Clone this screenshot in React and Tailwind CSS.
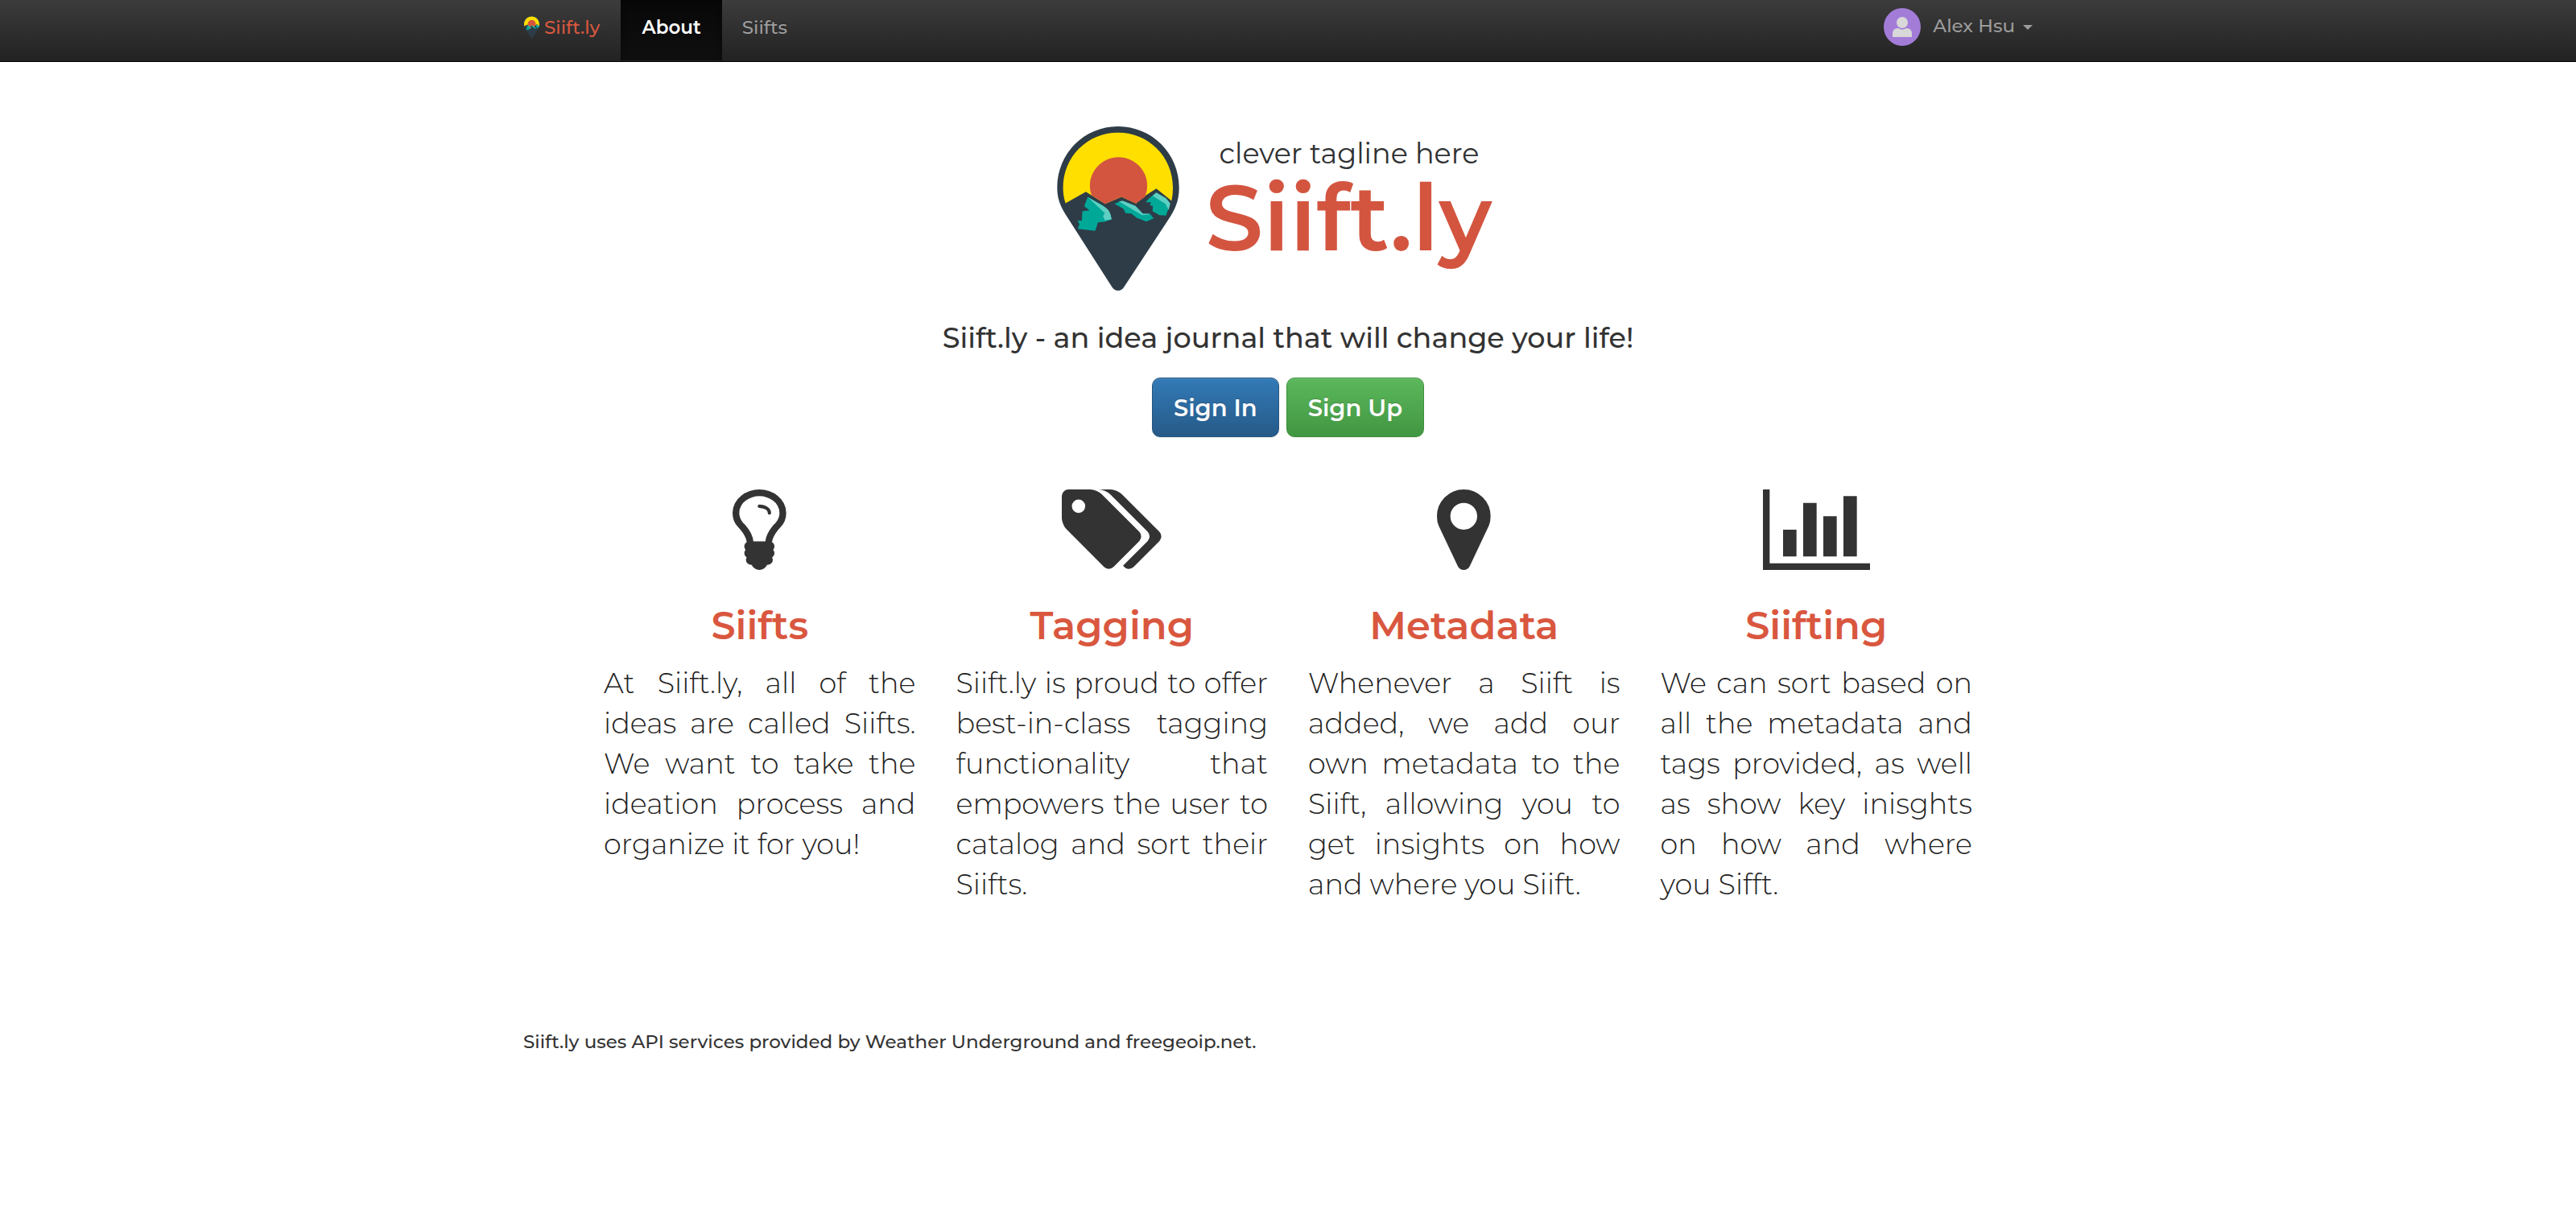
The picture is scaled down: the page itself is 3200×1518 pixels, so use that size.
import React from "react";

const FEATURES = [
  {
    title: "Siifts",
    viewBox: "384 128 1024 1536",
    path: "M1120 576q0 13-9.5 22.5t-22.5 9.5-22.5-9.5-9.5-22.5q0-46-54-71t-106-25q-13 0-22.5-9.5t-9.5-22.5 9.5-22.5 22.5-9.5q50 0 99.5 16t87 54 37.5 90zm160 0q0-72-34.5-134t-90-101.5-123-62-136.5-22.5-136.5 22.5-123 62-90 101.5-34.5 134q0 101 68 180 10 11 30.5 33t30.5 33q128 153 141 298h228q13-145 141-298 10-11 30.5-33t30.5-33q68-79 68-180zm128 0q0 155-103 268-45 49-74.5 87t-59.5 95.5-34 107.5q47 28 47 82 0 37-25 64 25 27 25 64 0 52-45 81 13 23 13 47 0 46-31.5 71t-77.5 25q-20 44-60 70t-87 26-87-26-60-70q-46 0-77.5-25t-31.5-71q0-24 13-47-45-29-45-81 0-37 25-64-25-27-25-64 0-54 47-82-4-50-34-107.5t-59.5-95.5-74.5-87q-103-113-103-268 0-99 44.5-184.5t117-142 164-89 186.5-32.5 186.5 32.5 164 89 117 142 44.5 184.5z",
    text: "At Siift.ly, all of the ideas are called Siifts. We want to take the ideation process and organize it for you!",
  },
  {
    title: "Tagging",
    viewBox: "0 128 1899 1536",
    path: "M448 448q0-53-37.5-90.5t-90.5-37.5-90.5 37.5-37.5 90.5 37.5 90.5 90.5 37.5 90.5-37.5 37.5-90.5zm1067 576q0 53-37 90l-491 492q-39 37-91 37-53 0-90-37l-715-716q-38-37-64.5-101t-26.5-117v-416q0-52 38-90t90-38h416q53 0 117 26.5t102 64.5l715 714q37 39 37 91zm384 0q0 53-37 90l-491 492q-39 37-91 37-36 0-59-14t-53-45l470-470q37-37 37-90 0-52-37-91l-715-714q-38-38-102-64.5t-117-26.5h224q53 0 117 26.5t102 64.5l715 714q37 39 37 91z",
    text: "Siift.ly is proud to offer best-in-class tagging functionality that empowers the user to catalog and sort their Siifts.",
  },
  {
    title: "Metadata",
    viewBox: "384 128 1024 1536",
    path: "M1152 640q0-106-75-181t-181-75-181 75-75 181 75 181 181 75 181-75 75-181zm256 0q0 109-33 179l-364 774q-16 33-47.5 52t-67.5 19-67.5-19-46.5-52l-365-774q-33-70-33-179 0-212 150-362t362-150 362 150 150 362z",
    text: "Whenever a Siift is added, we add our own metadata to the Siift, allowing you to get insights on how and where you Siift.",
  },
  {
    title: "Siifting",
    viewBox: "0 128 2048 1536",
    path: "M640 896v512h-256v-512h256zm384-512v1024h-256v-1024h256zm1024 1152v128h-2048v-1536h128v1408h1920zm-640-896v768h-256v-768h256zm384-384v1152h-256v-1152h256z",
    text: "We can sort based on all the metadata and tags provided, as well as show key inisghts on how and where you Sifft.",
  },
];

function PinLogo({ className }) {
  return (
    <svg viewBox="68 50 455 613" className={className} aria-hidden="true">
      <path
        fill="#2e3c47"
        d="M295 50C421 50 523 151 523 278C523 327 508 360 484 396L317 650Q308 663 295 663Q283 663 273 650L99 378C78 344 68 318 68 278C68 151 169 50 295 50Z"
      />
      <path
        fill="#ffdf00"
        d="M99 337C92 315 90 297 90 278C90 163 181 73 295 73C409 73 500 163 500 278Q500 303 495 328L438 282L404 304L362 338L308 313L247 339L175 294Z"
      />
      <path
        fill="#d35540"
        d="M196 307A107 107 0 1 1 398 307L397 312L362 338L308 313L247 339Z"
      />
      <path
        fill="#00a898"
        d="M182 314L240 346L268 380L271 397L245 406L220 408L210 440L145 432L151 415L144 401L160 402L162 366L189 364L169 348Z"
      />
      <path fill="#5fcfc3" d="M182 314L236 345Q262 357 267 379L271 397L246 401L239 385L246 374Z" />
      <path fill="#00a898" d="M282 339L310 327L360 347L388 376L415 377L428 393L401 405L364 391L345 375L323 374L315 357Z" />
      <path fill="#5fcfc3" d="M298 330L313 328L360 347L388 376L413 376L409 379L385 381Z" />
      <path fill="#00a898" d="M398 333L413 317L438 297L474 318L490 338L474 383L450 381L424 367L425 347L414 345L418 333Z" />
      <path fill="#5fcfc3" d="M424 309L438 297L474 318L490 338L484 362L472 339Z" />
    </svg>
  );
}

function Navbar() {
  return (
    <nav className="border-b border-black bg-linear-to-b from-[#3c3c3c] to-[#222222] text-[23px] leading-[33px] font-medium text-[#9d9d9d]">
      <div className="mx-auto flex h-[76px] max-w-[1900px] items-start">
        <a href="#home" className="flex items-start pt-[18px] pr-[26px] text-[#d9573f]">
          <PinLogo className="mt-px mr-[5px] h-[29px] w-[21px]" />
          <span>Siift.ly</span>
        </a>
        <a
          href="#about"
          aria-current="page"
          className="bg-linear-to-b from-[#080808] to-[#0f0f0f] px-[26px] pt-[18px] pb-6 font-semibold text-white shadow-[inset_0_3px_9px_rgba(0,0,0,0.25)]"
        >
          About
        </a>
        <a href="#siifts" className="px-[25px] pt-[18px] [text-shadow:0_-1px_0_rgba(0,0,0,0.25)]">
          Siifts
        </a>
        <button type="button" className="ml-auto flex items-start pt-[10px] pr-[25px] [text-shadow:0_-1px_0_rgba(0,0,0,0.25)]">
          <svg viewBox="0 0 46 47" className="h-[47px] w-[46px]" aria-hidden="true">
            <ellipse cx="23" cy="23.5" rx="23" ry="23.5" fill="#a37cd8" />
            <circle cx="23" cy="18" r="7" fill="#d8d8d8" />
            <path fill="#d8d8d8" d="M11 36V32Q11 25 18 25Q23 28.500 28 25Q35 25 35 32V36Z" />
          </svg>
          <span className="mt-[6px] ml-[15px]">Alex Hsu</span>
          <svg viewBox="0 0 12 6" className="mt-[21px] ml-[10px] h-[6px] w-3" aria-hidden="true">
            <path d="M0 0H12L6 6Z" fill="currentColor" />
          </svg>
        </button>
      </div>
    </nav>
  );
}

export default function App() {
  return (
    <div className="bg-white font-['Montserrat','Inter',sans-serif] text-[#333333]">
      <Navbar />
      <main>
        <header className="flex flex-col items-center pt-20">
          <div className="flex items-start pr-[34px]">
            <PinLogo className="h-[204px] w-[152px]" />
            <div className="ml-[33px]">
              <p className="pt-[12px] pl-[17px] text-[35px] leading-[44px] text-[#2f3133]">clever tagline here</p>
              <p className="text-[114px] leading-[116px] font-semibold text-[#d35540]">Siift.ly</p>
            </div>
          </div>
          <h1 className="mt-[39px] text-[35px] leading-10 font-medium">
            Siift.ly - an idea journal that will change your life!
          </h1>
          <div className="mt-[29px] flex gap-[9px] text-[29px] leading-10 font-semibold text-white">
            <button
              type="button"
              className="rounded-[10px] border border-[#245580] bg-linear-to-b from-[#337ab7] to-[#265a88] px-[26px] pt-[17px] pb-[15px] shadow-[inset_0_1px_0_rgba(255,255,255,0.15),0_1px_1px_rgba(0,0,0,0.075)] [text-shadow:0_-1px_0_rgba(0,0,0,0.2)]"
            >
              Sign In
            </button>
            <button
              type="button"
              className="rounded-[10px] border border-[#3e8f3e] bg-linear-to-b from-[#5cb85c] to-[#419641] px-[26px] pt-[17px] pb-[15px] shadow-[inset_0_1px_0_rgba(255,255,255,0.15),0_1px_1px_rgba(0,0,0,0.075)] [text-shadow:0_-1px_0_rgba(0,0,0,0.2)]"
            >
              Sign Up
            </button>
          </div>
        </header>
        <section className="mx-auto mt-[65px] grid max-w-[1750px] grid-cols-4">
          {FEATURES.map((f) => (
            <article key={f.title} className="px-[25px]">
              <svg viewBox={f.viewBox} className="mx-auto h-[100px]" fill="currentColor" aria-hidden="true">
                <path d={f.path} />
              </svg>
              <h2 className="mt-[42px] text-center text-[48px] leading-[54px] font-semibold text-[#d9573f]">{f.title}</h2>
              <p className="mt-[20px] text-justify text-[35px] leading-[50px] font-light text-[#222222]">{f.text}</p>
            </article>
          ))}
        </section>
      </main>
      <footer className="mx-auto mt-[154px] max-w-[1900px] text-[23px] leading-[33px] font-medium">
        Siift.ly uses API services provided by Weather Underground and freegeoip.net.
      </footer>
    </div>
  );
}
